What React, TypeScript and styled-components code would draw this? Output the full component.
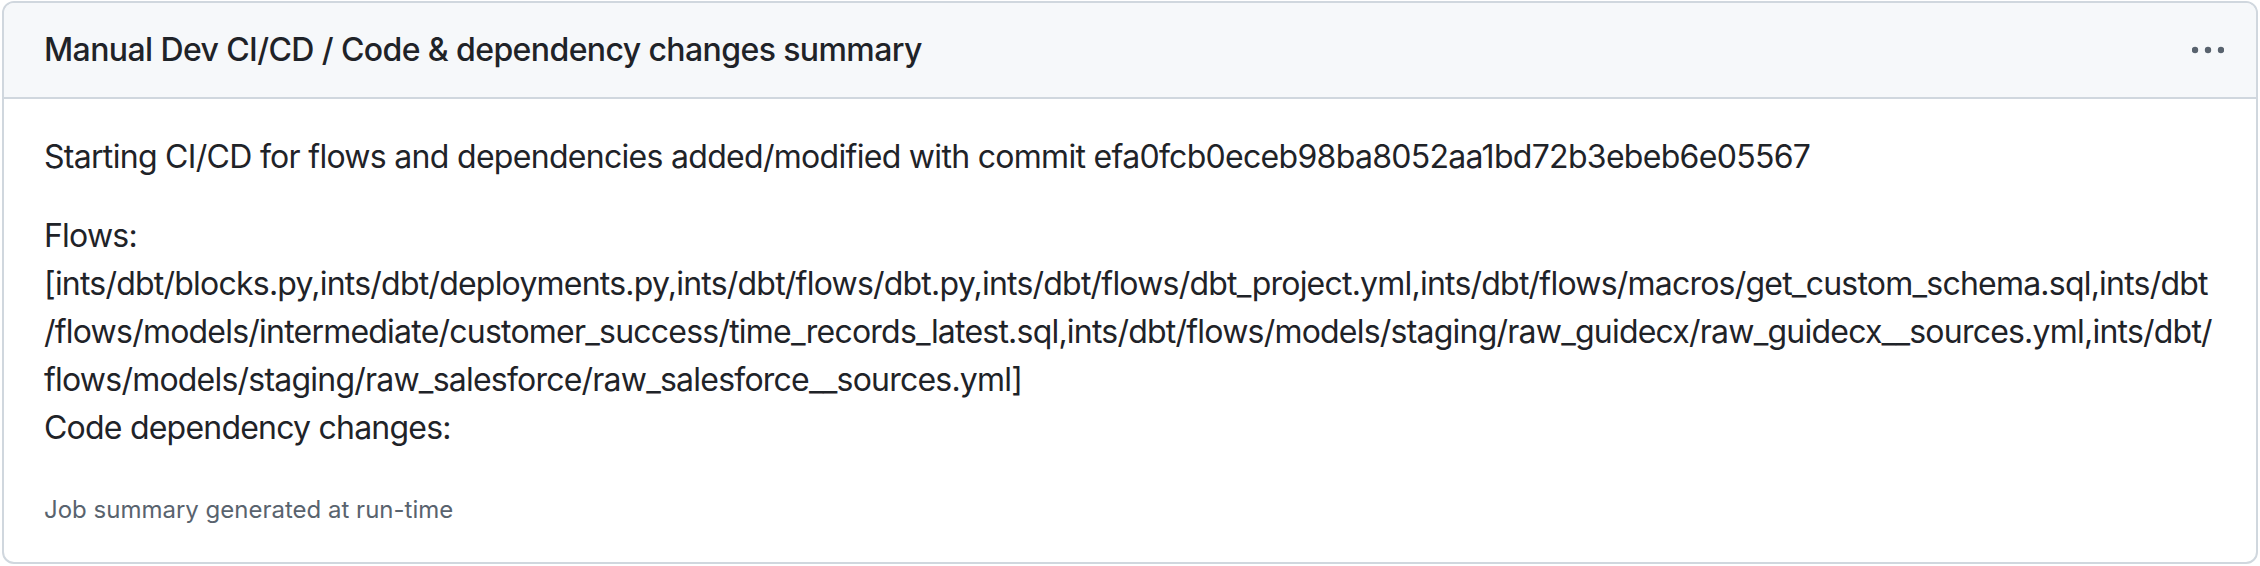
import React from "react";
import styled, { createGlobalStyle } from "styled-components";

const GlobalStyle = createGlobalStyle`
  body {
    margin: 0;
    background: #ffffff;
    font-family: Inter, "Noto Sans", "Liberation Sans", sans-serif;
    color: #1f2328;
  }
`;

const Page = styled.div`
  padding: 1px 2px 0 2px;
`;

const Card = styled.section`
  border: 2px solid #d0d7de;
  border-radius: 12px;
  overflow: hidden;
  background: #ffffff;
`;

const Header = styled.header`
  display: flex;
  align-items: center;
  justify-content: space-between;
  height: 96px;
  padding: 0 24px 0 40px;
  background: #f6f8fa;
  border-bottom: 2px solid #d0d7de;
  box-sizing: border-box;
`;

const Title = styled.h2`
  margin: 0;
  font-size: 32px;
  line-height: 48px;
  font-weight: 500;
  letter-spacing: -0.6px;
  color: #1f2328;
`;

const KebabButton = styled.button`
  display: flex;
  align-items: center;
  justify-content: center;
  width: 48px;
  height: 48px;
  padding: 0;
  border: 0;
  border-radius: 12px;
  background: transparent;
  color: #59636e;
  cursor: pointer;
`;

const Body = styled.div`
  padding: 34px 40px 34px 40px;
`;

const Paragraph = styled.p<{ $last?: boolean; $tight?: boolean }>`
  margin: 0 0 ${(p) => (p.$last ? "0" : "31px")} 0;
  font-size: 32px;
  line-height: 48px;
  letter-spacing: ${(p) => (p.$tight ? "-0.78px" : "-0.7px")};
  overflow-wrap: anywhere;
`;

const Note = styled.div`
  margin-top: 40px;
  font-size: 24px;
  line-height: 36px;
  color: #59636e;
`;

const flows =
  "[ints/dbt/blocks.py,ints/dbt/deployments.py,ints/dbt/flows/dbt.py,ints/dbt/flows/dbt_project.yml,ints/dbt/flows/macros/get_custom_schema.sql,ints/dbt/flows/models/intermediate/customer_success/time_records_latest.sql,ints/dbt/flows/models/staging/raw_guidecx/raw_guidecx__sources.yml,ints/dbt/flows/models/staging/raw_salesforce/raw_salesforce__sources.yml]";

export default function App() {
  return (
    <>
      <GlobalStyle />
      <Page>
        <Card>
          <Header>
            <Title>Manual Dev CI/CD / Code &amp; dependency changes summary</Title>
            <KebabButton aria-label="More options">
              <svg width="32" height="12" viewBox="0 0 32 12" fill="currentColor">
                <circle cx="3" cy="6" r="3.2" />
                <circle cx="16" cy="6" r="3.2" />
                <circle cx="29" cy="6" r="3.2" />
              </svg>
            </KebabButton>
          </Header>
          <Body>
            <Paragraph>
              Starting CI/CD for flows and dependencies added/modified with commit
              efa0fcb0eceb98ba8052aa1bd72b3ebeb6e05567
            </Paragraph>
            <Paragraph $last $tight>
              Flows:
              <br />
              {flows}
              <br />
              Code dependency changes:
            </Paragraph>
            <Note>Job summary generated at run-time</Note>
          </Body>
        </Card>
      </Page>
    </>
  );
}
